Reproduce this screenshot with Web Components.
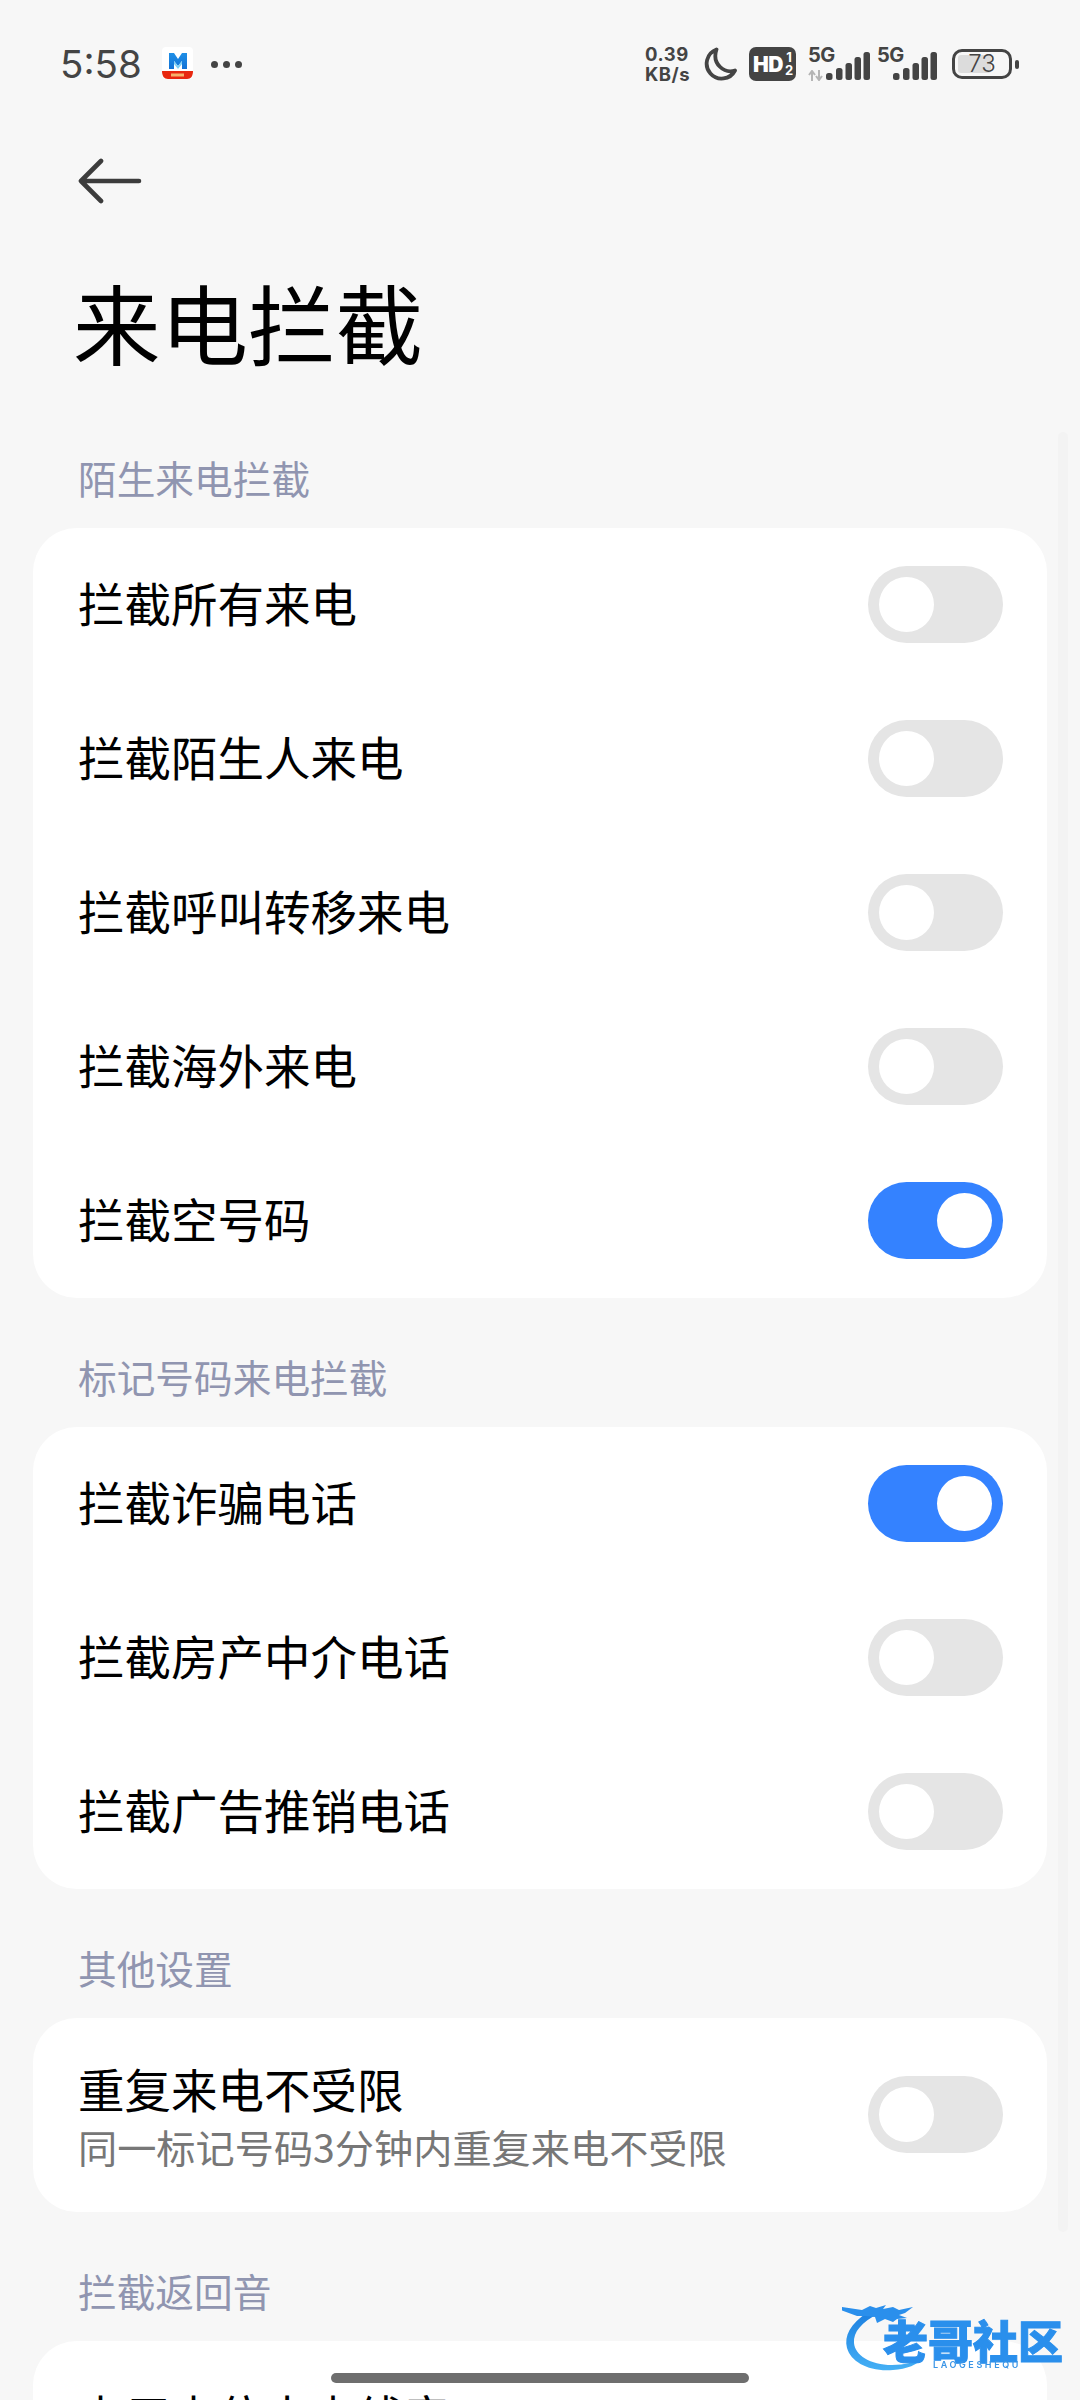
<!DOCTYPE html>
<html lang="zh-CN">
<head>
<meta charset="utf-8">
<title>来电拦截</title>
<style>
html,body{margin:0;padding:0;background:#f7f7f7;}
body{width:1080px;height:2400px;overflow:hidden;position:relative;font-family:"Noto Sans CJK SC","Noto Sans",sans-serif;color:#000;}
</style>
</head>
<body>
<phone-status></phone-status>
<back-bar></back-bar>
<page-title>来电拦截</page-title>

<section-label>陌生来电拦截</section-label>
<setting-card>
  <setting-row label="拦截所有来电"></setting-row>
  <setting-row label="拦截陌生人来电"></setting-row>
  <setting-row label="拦截呼叫转移来电"></setting-row>
  <setting-row label="拦截海外来电"></setting-row>
  <setting-row label="拦截空号码" on></setting-row>
</setting-card>

<section-label>标记号码来电拦截</section-label>
<setting-card>
  <setting-row label="拦截诈骗电话" on></setting-row>
  <setting-row label="拦截房产中介电话"></setting-row>
  <setting-row label="拦截广告推销电话"></setting-row>
</setting-card>

<section-label>其他设置</section-label>
<setting-card>
  <setting-row label="重复来电不受限" sub="同一标记号码3分钟内重复来电不受限"></setting-row>
</setting-card>

<section-label>拦截返回音</section-label>
<setting-card>
  <setting-row label="占用占位中占线音" value="忙音"></setting-row>
</setting-card>

<scroll-track></scroll-track>
<water-mark></water-mark>
<home-bar></home-bar>

<script>
function def(name, css, html, init){
  customElements.define(name, class extends HTMLElement{
    constructor(){
      super();
      const r=this.attachShadow({mode:'open'});
      r.innerHTML='<style>'+css+'</style>'+html;
    }
    connectedCallback(){ if(init) init(this, this.shadowRoot); }
  });
}

const bars = `<rect x="0" y="21" width="6.500" height="7" rx="2.500"/><rect x="10" y="16" width="6.500" height="12" rx="2.500"/><rect x="19.500" y="11" width="6.500" height="17" rx="2.500"/><rect x="28.500" y="5" width="6.500" height="23" rx="2.500"/><rect x="37.500" y="0" width="6.500" height="28" rx="2.500"/>`;

def('phone-status', `
  :host{display:flex;box-sizing:border-box;height:128px;padding:44px 61px 0 60px;justify-content:space-between;align-items:flex-start;color:#444;font-family:Inter,"Noto Sans",sans-serif;}
  .left,.right{display:flex;align-items:center;height:40px;}
  .time{font-size:38.500px;line-height:40px;font-weight:400;width:102px;}
  .dots{display:flex;gap:5px;margin-left:17px;}
  .dots i{width:7px;height:7px;border-radius:50%;background:#444;display:block;}
  .speed{font-size:18.500px;line-height:20px;letter-spacing:.5px;font-weight:700;width:50px;margin-right:8px;}
  .speed div{white-space:nowrap;}
  .moon{display:block;margin-right:12px;}
  .hd{box-sizing:border-box;width:47px;height:34px;border-radius:7px;background:#444;color:#fff;display:flex;align-items:center;padding-left:4px;margin-right:12px;font-weight:700;}
  .hd b{font-size:21px;letter-spacing:-.5px;line-height:1;}
  .frac{display:flex;flex-direction:column;align-items:center;font-size:13px;line-height:13.500px;font-weight:700;margin-left:2px;}
  .sig{position:relative;width:62px;height:36px;margin-right:7px;}
  .sig span{position:absolute;left:0;top:-1px;font-size:20px;line-height:20px;font-weight:700;letter-spacing:-.5px;}
  .sig svg.b{position:absolute;left:18px;top:6px;fill:#444;}
  .sig svg.a{position:absolute;left:0;top:24px;}
  .bat{position:relative;margin-left:8px;box-sizing:border-box;width:60px;height:30px;border:3px solid #444;border-radius:10px;display:flex;align-items:center;justify-content:center;font-size:24px;font-weight:300;}
  .bat i{position:absolute;left:3px;top:3px;bottom:3px;width:33px;background:#dcdcdc;border-radius:3px;}
  .bat em{position:relative;font-style:normal;line-height:1;}
  .nub{width:4px;height:9px;border-radius:2px;background:#444;margin-left:3px;}
`,`
  <div class="left">
    <div class="time">5:58</div>
    <svg width="32" height="34" viewBox="0 0 32 34">
      <defs><linearGradient id="m" x1="0" y1="0" x2="0" y2="1"><stop offset="0" stop-color="#1f8fe6"/><stop offset="1" stop-color="#1272d6"/></linearGradient></defs>
      <rect x="0" y="0" width="31" height="32" rx="4" fill="#fff"/>
      <path d="M7 6h5l4 6 4-6h5v16h-5v-8l-4 5-4-5v8H7z" fill="url(#m)"/>
      <path d="M12 14l4 5 4-5v3l-4 5-4-5z" fill="#7fd0f5"/>
      <path d="M0 24h31c0 5-2 8-6 8H6c-4 0-6-3-6-8z" fill="#e8270f"/>
      <rect x="9" y="26.500" width="13" height="3" fill="#f6b26b"/>
    </svg>
    <div class="dots"><i></i><i></i><i></i></div>
  </div>
  <div class="right">
    <div class="speed"><div>0.39</div><div>KB/s</div></div>
    <svg class="moon" width="34" height="34" viewBox="0 0 34 34"><path d="M13.500 2.500A15 15 0 1 0 32 23.500C21.500 27 8.500 17 13.500 2.500Z" fill="none" stroke="#444" stroke-width="3.800" stroke-linejoin="round"/></svg>
    <div class="hd"><b>HD</b><div class="frac"><span>1</span><span>2</span></div></div>
    <div class="sig"><span>5G</span>
      <svg class="a" width="16" height="11" viewBox="0 0 16 11"><path d="M4 11V2M1 5l3-4 3 4M11 0v9M8 6l3 4 3-4" fill="none" stroke="#b5b5b5" stroke-width="2"/></svg>
      <svg class="b" width="44" height="28" viewBox="0 0 44 28">${bars}</svg></div>
    <div class="sig" style="margin-right:7px;width:60px"><span>5G</span>
      <svg class="b" style="left:16px" width="44" height="28" viewBox="0 0 44 28">${bars}</svg></div>
    <div class="bat"><i></i><em>73</em></div><div class="nub"></div>
  </div>
`);

def('back-bar', `
  :host{display:flex;box-sizing:border-box;height:106px;padding-left:78px;align-items:center;}
  svg{display:block;}
`,`<svg width="64" height="48" viewBox="0 0 64 48"><path d="M23 4 3 24l20 20M3 24h58" fill="none" stroke="#3c3c3c" stroke-width="4.600" stroke-linecap="round" stroke-linejoin="round"/></svg>`);

def('page-title', `
  :host{display:block;box-sizing:border-box;height:165px;padding:27px 0 0 73px;font-size:87.500px;line-height:120px;font-weight:400;color:#000;white-space:nowrap;}
`,`<slot></slot>`);

def('section-label', `
  :host{display:block;box-sizing:border-box;height:129px;padding:49px 0 0 78px;font-size:38.700px;line-height:58px;font-weight:400;color:#9095b0;white-space:nowrap;}
`,`<slot></slot>`);

def('setting-card', `
  :host{display:block;margin:0 33px;background:#fff;border-radius:44px;overflow:hidden;}
`,`<slot></slot>`);

def('setting-row', `
  :host{display:flex;box-sizing:border-box;min-height:154px;padding:0 44px 0 45px;align-items:center;justify-content:space-between;}
  :host([sub]){min-height:194px;}
  .t{min-width:0;padding-bottom:6px;}
  :host([sub]) .t{padding-bottom:0;padding-top:2px;}
  .l{font-size:46.500px;line-height:56px;font-weight:400;color:#000;white-space:nowrap;}
  .s{font-size:39.200px;line-height:54px;font-weight:400;color:#777;white-space:nowrap;margin-top:3px;}
  .v{font-size:44px;line-height:56px;color:#c4c4c4;white-space:nowrap;padding-top:4px;}
  toggle-switch{margin-bottom:2px;}
`,`<div class="t"><div class="l"></div><div class="s"></div></div><toggle-switch></toggle-switch><div class="v"></div>`,
(el,r)=>{
  r.querySelector('.l').textContent=el.getAttribute('label')||'';
  const s=r.querySelector('.s');
  if(el.hasAttribute('sub')) s.textContent=el.getAttribute('sub'); else s.remove();
  const t=r.querySelector('toggle-switch');
  const v=r.querySelector('.v');
  if(el.hasAttribute('value')){ t.remove(); v.textContent=el.getAttribute('value'); }
  else { v.remove(); if(el.hasAttribute('on')) t.setAttribute('on',''); }
});

def('toggle-switch', `
  :host{display:flex;flex:none;box-sizing:border-box;width:135px;height:77px;border-radius:39px;background:#e5e5e5;padding:11px;justify-content:flex-start;}
  :host([on]){background:#3482ff;justify-content:flex-end;}
  i{display:block;width:55px;height:55px;border-radius:50%;background:#fff;}
`,`<i></i>`);

def('scroll-track', `
  :host{position:absolute;left:1058px;top:432px;width:10px;height:1800px;background:#f3f3f3;border-radius:5px;}
`,``);

def('home-bar', `
  :host{position:absolute;left:331px;top:2373px;width:418px;height:10px;background:#6e6e6e;border-radius:5px;}
`,``);

def('water-mark', `
  :host{position:absolute;left:842px;top:2300px;width:224px;height:76px;display:block;filter:blur(.6px);}
  svg{position:absolute;left:0;top:0;}
  .cn{position:absolute;left:41px;top:20px;font-size:45px;line-height:40px;font-weight:900;color:#2a8fec;white-space:nowrap;-webkit-text-stroke:1px #2a8fec;font-family:"Noto Sans CJK SC",sans-serif;}
  .en{position:absolute;left:91px;top:60px;font-size:9px;line-height:10px;letter-spacing:2.600px;font-weight:600;color:#3a95e6;font-family:Inter,sans-serif;white-space:nowrap;}
`,`
  <svg width="224" height="76" viewBox="0 0 224 76">
    <defs><linearGradient id="w" x1="0" y1="0" x2="0" y2="1"><stop offset="0" stop-color="#1c7fe0"/><stop offset="1" stop-color="#45b0f5"/></linearGradient></defs>
    <path d="M26 12C8 24 2 36 5 48c4 14 22 24 46 22 14-1 24-5 32-13-10 5-20 8-33 8C28 65 13 55 12 43 11 32 20 22 36 14z" fill="url(#w)"/>
    <path d="M0 7l20 3 8-4 6 2 10-3-3 4 10-2 6 3 14-3-8 6-6 2 8 3-10 1-4 3-8-3-8 4-2-6-10-1-8 0-16-6z" fill="#2a8fec"/>
  </svg>
  <div class="cn">老哥社区</div>
  <div class="en">LAOGESHEQU</div>
`);
</script>
</body>
</html>
